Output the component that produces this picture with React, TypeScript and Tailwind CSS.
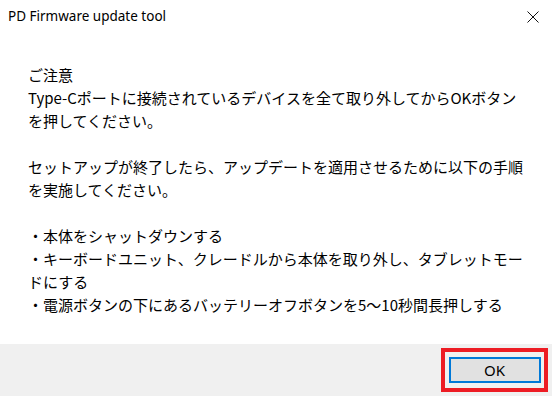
import React from "react";

const lines: (string | null)[] = [
  "ご注意",
  "Type-Cポートに接続されているデバイスを全て取り外してからOKボタン",
  "を押してください。",
  null,
  "セットアップが終了したら、アップデートを適用させるために以下の手順",
  "を実施してください。",
  null,
  "・本体をシャットダウンする",
  "・キーボードユニット、クレードルから本体を取り外し、タブレットモー",
  "ドにする",
  "・電源ボタンの下にあるバッテリーオフボタンを5～10秒間長押しする",
];

const App = () => {
  return (
    <div className="w-[552px] h-[396px] bg-white flex flex-col overflow-hidden">
      {/* title bar */}
      <div className="h-[34px] flex items-center justify-between pl-2 pr-[13px]">
        <span className="text-[13.5px] text-black font-['Noto_Sans',sans-serif] leading-none">
          PD Firmware update tool
        </span>
        <svg width="12" height="12" viewBox="0 0 12 12">
          <path d="M0.5 0.5 L11.5 11.5 M11.5 0.5 L0.5 11.5" stroke="#111" strokeWidth="1" />
        </svg>
      </div>

      {/* message */}
      <div className="flex-1 pt-[29px] pl-[28px] font-['Noto_Sans_CJK_JP',sans-serif] text-[15px] leading-[23px] text-black">
        {lines.map((line, i) =>
          line === null ? (
            <div key={i} className="h-[23px]" />
          ) : (
            <div key={i} className="whitespace-nowrap">
              {line}
            </div>
          )
        )}
      </div>

      {/* footer */}
      <div className="h-[52px] bg-[#f0f0f0] flex justify-end items-center pr-1">
        <div className="border-4 border-[#ed1c24] bg-[#f0f0f0] w-[107px] h-[44px] flex items-center justify-center">
          <button className="w-[92px] h-[26px] border-2 border-[#0078d7] bg-[#e1e1e1] text-[15px] text-black font-['Noto_Sans',sans-serif] leading-none flex items-center justify-center">
            OK
          </button>
        </div>
      </div>
    </div>
  );
};

export default App;
